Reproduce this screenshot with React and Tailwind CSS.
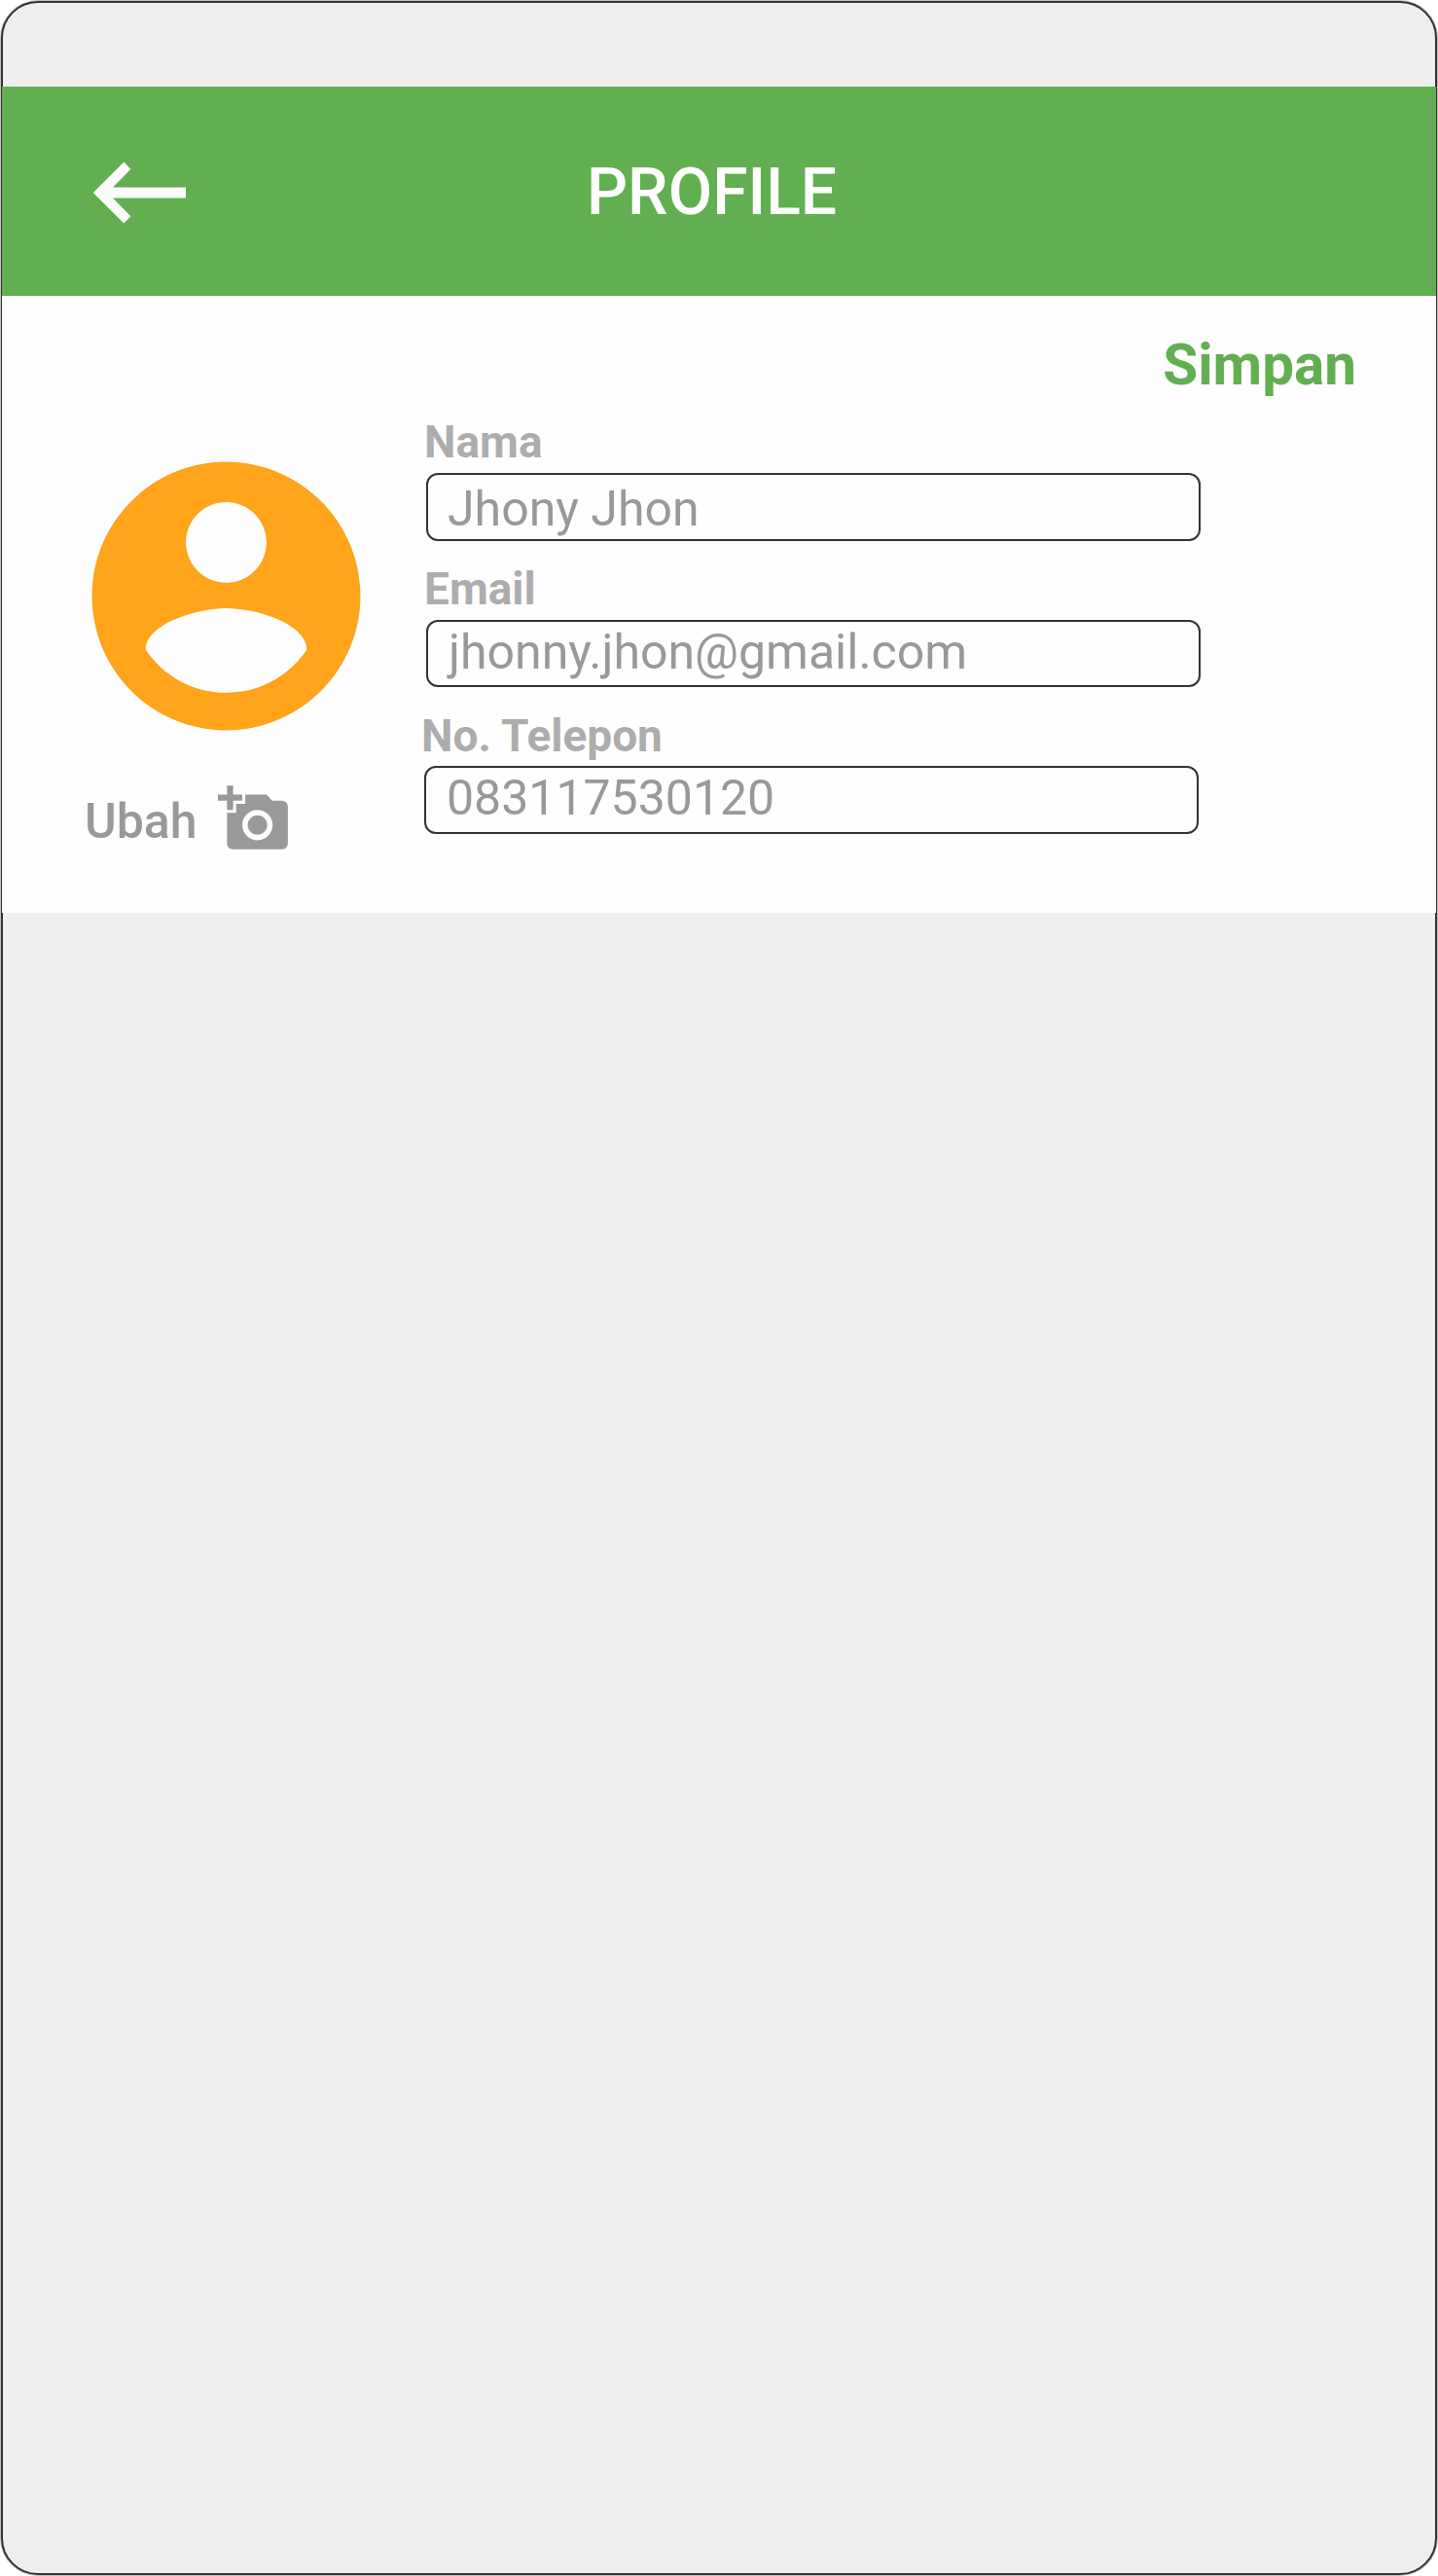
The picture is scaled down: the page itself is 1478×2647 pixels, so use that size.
function Field({ label, value, className, labelClass, boxClass }) {
  return (
    <div className={className}>
      <div className={`text-[46px] leading-[55px] font-bold text-[#adadad] ${labelClass}`}>{label}</div>
      <div
        className={`flex w-[796px] rounded-[12px] border-2 border-[#373132] text-[50px] leading-[60px] whitespace-nowrap text-[#999999] ${boxClass}`}
      >
        {value}
      </div>
    </div>
  );
}

export default function App() {
  return (
    <div className="h-[2647px] w-[1478px] overflow-hidden bg-white p-px font-['Roboto',sans-serif]">
      <div className="h-[2645px] w-[1476px] rounded-[38px] border-2 border-[#373132] bg-[#eeeeee] pt-[86px] ring-1 ring-[#c6c0c3]">
        <header className="-mx-px flex h-[215px] w-[1474px] bg-[#61af50]">
          <svg className="mt-[77px] ml-[93px] h-[64px] w-[97px] shrink-0" viewBox="0 0 97 64" fill="#fcfcfc">
            <path d="M.7 32 32.3.6l7.1 7.1L21 26.6h75v10.8H21l18.4 18.9-7.1 7.1Z" />
          </svg>
          <h1 className="mt-[69px] ml-[411px] text-[66px] leading-[79px] font-medium text-white">PROFILE</h1>
        </header>
        <main className="-mx-px flex h-[634px] w-[1474px] bg-[#fefefe]">
          <section className="w-[435px] shrink-0">
            <svg className="mt-[143px] ml-[65.4px] size-[331px]" viewBox="0 0 24 24" fill="#ffa41b">
              <path d="M12 2C6.48 2 2 6.48 2 12s4.48 10 10 10 10-4.48 10-10S17.52 2 12 2zm0 3c1.66 0 3 1.34 3 3s-1.34 3-3 3-3-1.34-3-3 1.34-3 3-3zm0 14.2c-2.5 0-4.71-1.28-6-3.22.03-1.99 4-3.08 6-3.08 1.99 0 5.97 1.09 6 3.08-1.29 1.94-3.5 3.22-6 3.22z" />
            </svg>
            <div className="mt-[26px] ml-[85px] flex text-[#999999]">
              <span className="mt-[10px] w-[137px] text-[50px] leading-[60px] font-medium">Ubah</span>
              <svg className="size-[75px]" viewBox="0 0 24 24" fill="currentColor">
                <path d="M3 4V1h2v3h3v2H5v3H3V6H0V4h3zm3 6V7h3V4h7l1.83 2H21c1.1 0 2 .9 2 2v12c0 1.1-.9 2-2 2H5c-1.1 0-2-.9-2-2V10h3zm7 9c2.76 0 5-2.24 5-5s-2.24-5-5-5-5 2.24-5 5 2.24 5 5 5zm-3.2-5c0 1.77 1.43 3.2 3.2 3.2s3.2-1.43 3.2-3.2-1.43-3.2-3.2-3.2-3.2 1.43-3.2 3.2z" />
              </svg>
            </div>
          </section>
          <section className="flex-1">
            <div className="mt-[37px] mr-[82px] text-right text-[58.4px] leading-[68px] font-bold text-[#61af50]">Simpan</div>
            <Field
              className="mt-[18px] ml-px"
              label="Nama"
              labelClass="-ml-[2px]"
              value="Jhony Jhon"
              boxClass="mt-[4px] h-[70px] pt-[5px] pl-[20px]"
            />
            <Field
              className="mt-[22px] ml-px"
              label="Email"
              labelClass="-ml-[2px]"
              value="jhonny.jhon@gmail.com"
              boxClass="mt-[4px] h-[69px] pt-px pl-[21px]"
            />
            <Field
              className="mt-[23px] -ml-px"
              label="No. Telepon"
              labelClass="-ml-[3px]"
              value="083117530120"
              boxClass="mt-[3px] h-[70px] pt-px pl-[21px]"
            />
          </section>
        </main>
      </div>
    </div>
  );
}
